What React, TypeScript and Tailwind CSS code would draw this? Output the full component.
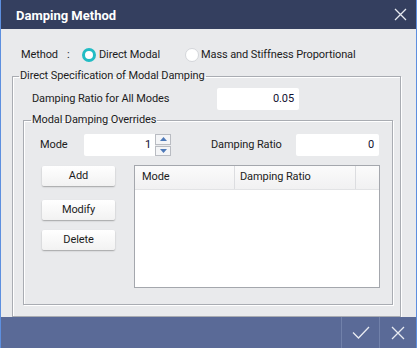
import React from "react";

const font = { fontFamily: 'Roboto, "Noto Sans", sans-serif' };

function Btn({ label, className = "" }: { label: string; className?: string }) {
  return (
    <div
      className={
        "w-[73px] h-[20px] flex items-center justify-center rounded-[2px] bg-gradient-to-b from-white to-[#f2f2f2] shadow-[0_1px_1.5px_rgba(0,0,0,0.3)] text-[#1c1c1c] " +
        className
      }
    >
      {label}
    </div>
  );
}

export default function App() {
  return (
    <div className="w-[418px] h-[353px] bg-white" style={font}>
      <div className="w-[417px] h-[348px] flex flex-col border-x border-b border-[#5d8fdf] bg-[#e9eaec] text-[11px] tracking-[-0.1px] text-[#1c1c1c]">
        {/* Title bar */}
        <div className="h-[29px] shrink-0 bg-[#343f5f] flex items-center justify-between pl-[15px] pr-[9px]">
          <span className="text-white font-bold text-[13px] tracking-normal pt-[3px]">Damping Method</span>
          <svg width="13" height="13" viewBox="0 0 13 13" className="mb-[1px]">
            <path d="M1 1 L12 12 M12 1 L1 12" stroke="#e6e9f0" strokeWidth="1.3" />
          </svg>
        </div>

        {/* Body */}
        <div className="flex-1 flex flex-col">
          {/* Method row */}
          <div className="mt-[19px] h-[14px] flex items-center pl-[20px]">
            <span className="w-[46px]">Method</span>
            <span className="w-[15px]">:</span>
            <span className="w-[14px] h-[14px] rounded-full border-[3px] border-[#22bcc4] bg-white box-border" />
            <span className="ml-[3px] w-[86px]">Direct Modal</span>
            <span className="w-[14px] h-[14px] rounded-full border border-[#d4d6da] bg-white box-border" />
            <span className="ml-[2px]">Mass and Stiffness Proportional</span>
          </div>

          {/* Group 1 */}
          <fieldset className="mt-[7px] ml-[11px] w-[389px] h-[248px] border border-[#a9acb2] shadow-[inset_1px_1px_0_#ffffff,1px_1px_0_#ffffff]">
            <legend className="ml-[6px] px-[1px] leading-[14px]">
              Direct Specification of Modal Damping
            </legend>
            <div className="mt-[5px] flex items-center h-[22px]">
              <span className="ml-[19px] w-[185px]">Damping Ratio for All Modes</span>
              <div className="w-[82px] h-[22px] bg-white rounded-[2px] flex items-center justify-end pr-[5px] text-[#101030]">
                0.05
              </div>
            </div>

            {/* Group 2 */}
            <fieldset className="mt-[3px] ml-[10px] w-[370px] h-[192px] border border-[#a9acb2] shadow-[inset_1px_1px_0_#ffffff,1px_1px_0_#ffffff]">
              <legend className="ml-[7px] px-[1px] leading-[14px]">Modal Damping Overrides</legend>
              <div className="mt-[7px] flex items-center h-[22px]">
                <span className="ml-[16px] w-[44px]">Mode</span>
                <div className="w-[71px] h-[22px] bg-white rounded-l-[2px] flex items-center justify-end pr-[4px] text-[#101030]">
                  1
                </div>
                <div className="w-[16px] h-[22px] flex flex-col gap-[1px]">
                  <div className="flex-1 border border-[#b9bcc2] bg-[#f4f5f7] flex items-center justify-center">
                    <svg width="7" height="4" viewBox="0 0 7 4">
                      <path d="M0 4 L3.5 0 L7 4 Z" fill="#4d79b8" />
                    </svg>
                  </div>
                  <div className="flex-1 border border-[#b9bcc2] bg-[#f4f5f7] flex items-center justify-center">
                    <svg width="7" height="4" viewBox="0 0 7 4">
                      <path d="M0 0 L3.5 4 L7 0 Z" fill="#4d79b8" />
                    </svg>
                  </div>
                </div>
                <span className="ml-[40px] w-[85px]">Damping Ratio</span>
                <div className="w-[83px] h-[22px] bg-white rounded-[2px] flex items-center justify-end pr-[5px] text-[#101030]">
                  0
                </div>
              </div>

              <div className="mt-[9px] flex">
                <div className="ml-[18px] mt-[1px] flex flex-col">
                  <Btn label="Add" />
                  <Btn label="Modify" className="mt-[14px]" />
                  <Btn label="Delete" className="mt-[10px]" />
                </div>
                <div className="ml-[19px] w-[246px] h-[123px] border border-[#a4a7ad] bg-white flex flex-col">
                  <div className="h-[24px] flex bg-gradient-to-b from-[#fbfbfb] to-[#f1f1f2] border-b border-[#e2e3e5]">
                    <div className="w-[100px] border-r border-[#dcdde0] flex items-center pl-[7px]">Mode</div>
                    <div className="w-[121px] border-r border-[#dcdde0] flex items-center pl-[5px]">Damping Ratio</div>
                    <div className="flex-1" />
                  </div>
                </div>
              </div>
            </fieldset>
          </fieldset>
        </div>

        {/* Footer */}
        <div className="h-[31px] shrink-0 bg-[#5a6a97] flex justify-end">
          <div className="w-[38px] border-l border-[#7181aa] flex items-center justify-center">
            <svg width="18" height="13" viewBox="0 0 18 13">
              <path d="M1 6.5 L6.5 12 L17 1" stroke="#e8ebf2" strokeWidth="1.3" fill="none" />
            </svg>
          </div>
          <div className="w-[37px] border-l border-[#7181aa] flex items-center justify-center">
            <svg width="14" height="14" viewBox="0 0 14 14">
              <path d="M1 1 L13 13 M13 1 L1 13" stroke="#e8ebf2" strokeWidth="1.3" />
            </svg>
          </div>
        </div>
      </div>
    </div>
  );
}
